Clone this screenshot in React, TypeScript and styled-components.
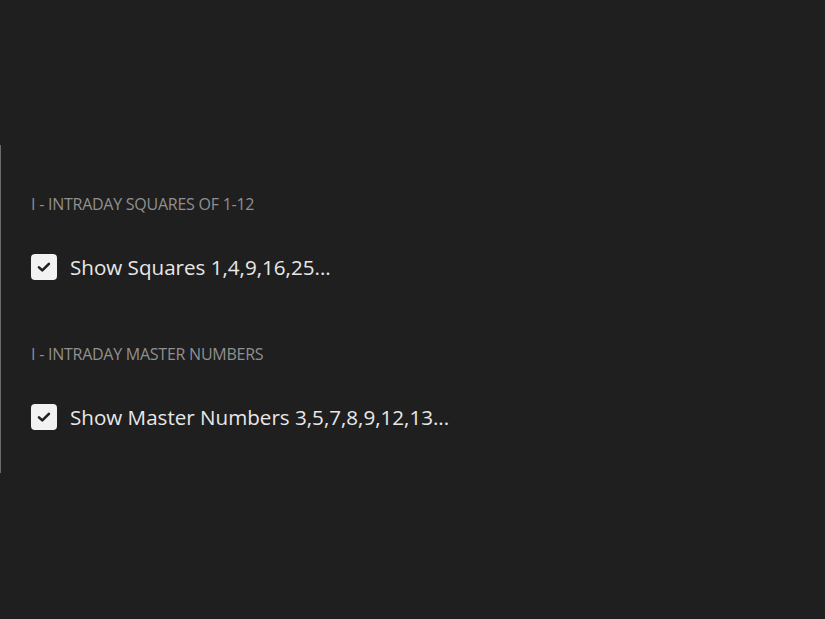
import styled, { createGlobalStyle } from "styled-components"

const GlobalStyle = createGlobalStyle`
  html, body {
    margin: 0;
    padding: 0;
    background: #1f1f1f;
    height: 100%;
  }
  #root {
    min-height: 100vh;
  }
`

const Page = styled.div`
  min-height: 100vh;
  background: #1f1f1f;
  padding-top: 145px;
  box-sizing: border-box;
`

const Panel = styled.div`
  border-left: 1px solid #6a6a6a;
  height: 328px;
  box-sizing: border-box;
  padding: 49px 0 0 30px;
  display: flex;
  flex-direction: column;
`

const Section = styled.section`
  display: flex;
  flex-direction: column;
  height: 150px;
  flex-shrink: 0;
`

const SectionTitle = styled.div`
  font-family: "Open Sans", "Noto Sans", sans-serif;
  font-size: 16px;
  line-height: 20px;
  color: #909090;
  text-transform: uppercase;
  letter-spacing: -0.25px;
`

const Row = styled.label`
  display: flex;
  align-items: center;
  gap: 13px;
  margin-top: 40px;
  cursor: pointer;
`

const Box = styled.span<{ $checked: boolean }>`
  width: 26px;
  height: 26px;
  border-radius: 4px;
  background: ${({ $checked }) => ($checked ? "#f2f2f2" : "transparent")};
  border: ${({ $checked }) => ($checked ? "none" : "1px solid #8c8c8c")};
  display: flex;
  align-items: center;
  justify-content: center;
  flex-shrink: 0;
`

const Label = styled.span`
  font-family: "Open Sans", "Noto Sans", sans-serif;
  font-size: 20.6px;
  line-height: 26px;
  color: #e8e8e8;
`

const CheckMark = () => (
  <svg width="16" height="16" viewBox="0 0 16 16" fill="none">
    <path
      d="M3 8.4 L6.3 11.4 L12.9 4.9"
      stroke="#1f1f1f"
      strokeWidth="2.6"
      strokeLinecap="round"
      strokeLinejoin="round"
    />
  </svg>
)

const sections = [
  { title: "I - Intraday Squares of 1-12", label: "Show Squares 1,4,9,16,25..." },
  { title: "I - Intraday Master Numbers", label: "Show Master Numbers 3,5,7,8,9,12,13..." },
]

export default function App() {
  return (
    <>
      <GlobalStyle />
      <Page>
        <Panel>
          {sections.map((s) => (
            <Section key={s.title}>
              <SectionTitle>{s.title}</SectionTitle>
              <Row>
                <Box $checked>
                  <CheckMark />
                </Box>
                <Label>{s.label}</Label>
              </Row>
            </Section>
          ))}
        </Panel>
      </Page>
    </>
  )
}
